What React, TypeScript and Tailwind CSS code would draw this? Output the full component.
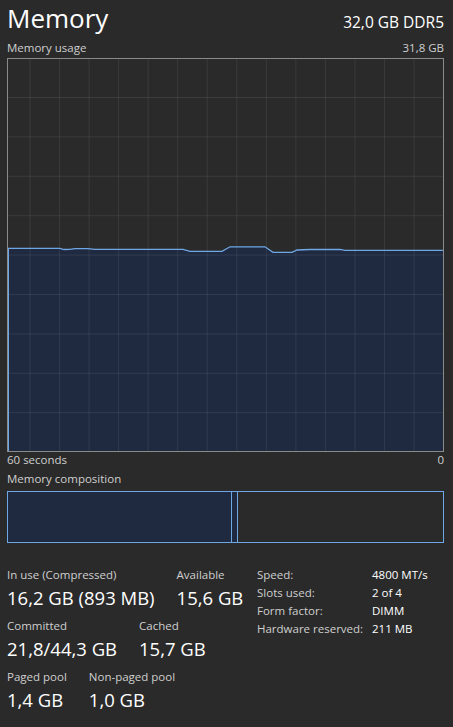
import React from "react";

const FONT = { fontFamily: '"Open Sans", "Noto Sans", sans-serif' };

// usage trace in chart coordinates (0..435 x 0..392)
const TRACE: [number, number][] = [
  [0, 189.3],
  [52, 189.3],
  [56, 190.5],
  [62, 190.3],
  [67, 189.6],
  [80, 189.6],
  [87, 190.4],
  [175, 190.4],
  [182, 192.3],
  [214, 192.3],
  [222, 187.8],
  [257, 187.8],
  [265, 193.3],
  [284, 193.3],
  [289, 191],
  [302, 190.5],
  [332, 190.4],
  [337, 191.3],
  [435, 191.3],
];

const V_LINES = Array.from({ length: 14 }, (_, i) => 22 + i * 29.54);
const H_LINES = Array.from({ length: 9 }, (_, i) => 38.5 + i * 39.4);

function UsageChart() {
  const line = TRACE.map(([x, y], i) => `${i ? "L" : "M"}${x} ${y}`).join(" ");
  const area = `${line} L435 392 L0 392 Z`;
  return (
    <div className="mt-[2px] h-[394px] w-[437px] border border-[#8a8a8a]">
      <svg width="435" height="392" viewBox="0 0 435 392" className="block">
        <path d={area} fill="#1f2a40" />
        {V_LINES.map((x) => (
          <line key={x} x1={x} y1={0} x2={x} y2={392} stroke="rgba(255,255,255,0.08)" />
        ))}
        {H_LINES.map((y) => (
          <line key={y} x1={0} y1={y} x2={435} y2={y} stroke="rgba(255,255,255,0.08)" />
        ))}
        <path d={line} fill="none" stroke="#6fa6e4" strokeWidth="1.3" />
        <line x1={0.5} y1={189.3} x2={0.5} y2={392} stroke="#6fa6e4" />
      </svg>
    </div>
  );
}

function CompositionBar() {
  return (
    <div className="mt-[4px] flex h-[52px] w-[437px] border border-[#6fa6e4]">
      <div className="w-[224px] border-r border-[#6fa6e4] bg-[#1f2a40]" />
      <div className="w-[6px] border-r border-[#6fa6e4] bg-[#1f2a40]" />
      <div className="flex-1" />
    </div>
  );
}

function Stat({ label, value }: { label: string; value: string }) {
  return (
    <div className="flex flex-col">
      <span className="text-[11.5px] leading-4 text-[#cfcfcf]">{label}</span>
      <span className="h-[30px] whitespace-nowrap text-[18.5px] leading-[30px] text-white">{value}</span>
    </div>
  );
}

const SPECS = [
  ["Speed:", "4800 MT/s"],
  ["Slots used:", "2 of 4"],
  ["Form factor:", "DIMM"],
  ["Hardware reserved:", "211 MB"],
];

export default function App() {
  return (
    <div className="h-[727px] w-[453px] overflow-hidden bg-[#2a2a2a] pl-[7px] text-white" style={FONT}>
      {/* header */}
      <div className="mt-[2px] flex w-[437px] items-baseline justify-between">
        <span className="text-[26px] leading-[32px] text-white">Memory</span>
        <span className="text-[15.5px] leading-[32px] text-white">32,0 GB DDR5</span>
      </div>

      <div className="mt-[2px] flex w-[437px] justify-between text-[11.5px] leading-4 text-[#cfcfcf]">
        <span>Memory usage</span>
        <span>31,8 GB</span>
      </div>

      <UsageChart />

      <div className="flex w-[437px] justify-between text-[11.5px] leading-4 text-[#cfcfcf]">
        <span>60 seconds</span>
        <span>0</span>
      </div>
      <div className="mt-[3px] text-[11.5px] leading-4 text-[#cfcfcf]">Memory composition</div>

      <CompositionBar />

      {/* stats */}
      <div className="mt-[24px] flex items-start">
        <div className="flex w-[250px] flex-col gap-[5px]">
          <div className="flex gap-[22px]">
            <Stat label="In use (Compressed)" value="16,2 GB (893 MB)" />
            <Stat label="Available" value="15,6 GB" />
          </div>
          <div className="flex gap-[22px]">
            <Stat label="Committed" value="21,8/44,3 GB" />
            <Stat label="Cached" value="15,7 GB" />
          </div>
          <div className="flex gap-[22px]">
            <Stat label="Paged pool" value="1,4 GB" />
            <Stat label="Non-paged pool" value="1,0 GB" />
          </div>
        </div>
        <div className="-mt-[1px] grid grid-cols-[115px_auto] text-[11.5px] leading-[18px]">
          {SPECS.map(([k, v]) => (
            <React.Fragment key={k}>
              <span className="text-[#cfcfcf]">{k}</span>
              <span className="text-white">{v}</span>
            </React.Fragment>
          ))}
        </div>
      </div>
    </div>
  );
}
